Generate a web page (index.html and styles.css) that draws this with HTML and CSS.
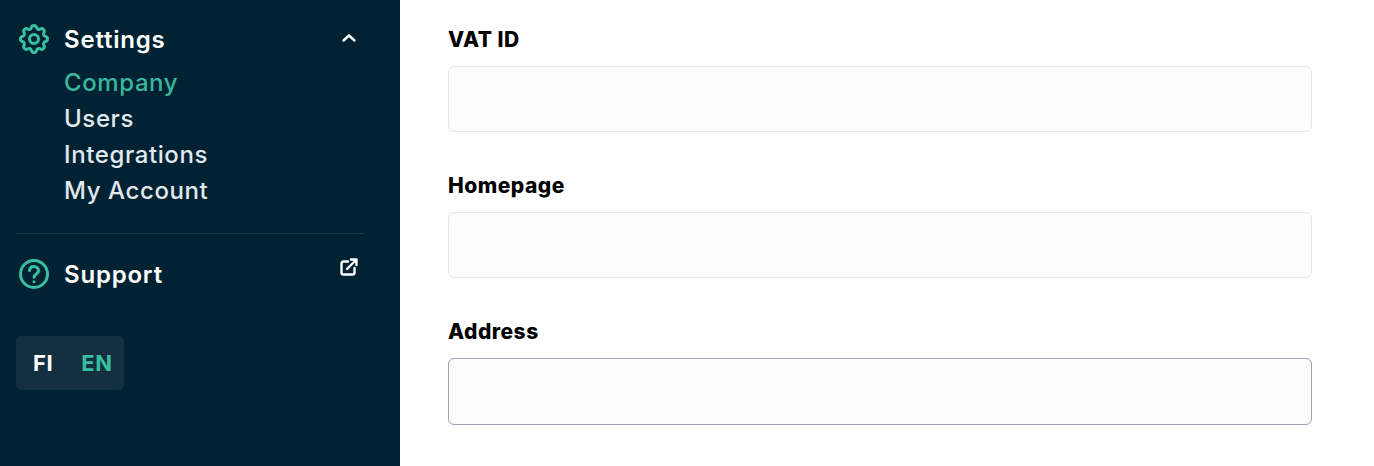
FILE: index.html
```html
<!DOCTYPE html>
<html lang="en">
<head>
  <meta charset="UTF-8">
  <meta name="viewport" content="width=device-width, initial-scale=1.0">
  <title>Company settings</title>
  <link rel="stylesheet" href="styles.css">
</head>
<body>
  <aside class="sidebar">
    <div class="nav-row nav-row-settings">
      <svg class="nav-icon" viewBox="0 0 24 24" fill="none" stroke="currentColor" stroke-width="2" stroke-linecap="round" stroke-linejoin="round">
        <path d="M10.325 4.317c.426-1.756 2.924-1.756 3.35 0a1.724 1.724 0 002.573 1.066c1.543-.94 3.31.826 2.37 2.37a1.724 1.724 0 001.065 2.572c1.756.426 1.756 2.924 0 3.35a1.724 1.724 0 00-1.066 2.573c.94 1.543-.826 3.31-2.37 2.37a1.724 1.724 0 00-2.572 1.065c-.426 1.756-2.924 1.756-3.35 0a1.724 1.724 0 00-2.573-1.066c-1.543.94-3.31-.826-2.37-2.37a1.724 1.724 0 00-1.065-2.572c-1.756-.426-1.756-2.924 0-3.35a1.724 1.724 0 001.066-2.573c-.94-1.543.826-3.31 2.37-2.37.996.608 2.296.07 2.572-1.065z"/>
        <path d="M15 12a3 3 0 11-6 0 3 3 0 016 0z"/>
      </svg>
      <span class="nav-title">Settings</span>
      <svg class="nav-chevron" viewBox="0 0 16 10" fill="none" stroke="currentColor" stroke-width="2.4" stroke-linecap="round" stroke-linejoin="round">
        <path d="M2.5 7.5 8 2.5l5.500 5"/>
      </svg>
    </div>
    <nav class="subnav">
      <a class="subnav-link active" href="#">Company</a>
      <a class="subnav-link" href="#">Users</a>
      <a class="subnav-link" href="#">Integrations</a>
      <a class="subnav-link" href="#">My Account</a>
    </nav>
    <div class="nav-divider"></div>
    <div class="nav-row nav-row-support">
      <svg class="nav-icon" viewBox="0 0 24 24" fill="none" stroke="currentColor" stroke-width="2" stroke-linecap="round" stroke-linejoin="round">
        <path d="M9 9.700c.2-1.600 1.400-2.700 3-2.700 1.700 0 3 1.200 3 2.700 0 1.300-.8 2-1.800 2.600-.8.500-1.200 1-1.200 1.900m0 3h.01M21 12a9 9 0 11-18 0 9 9 0 0118 0z"/>
      </svg>
      <span class="nav-title">Support</span>
      <svg class="nav-external" viewBox="0 0 18 18" fill="none" stroke="currentColor" stroke-width="2.400" stroke-linecap="round" stroke-linejoin="round">
        <path d="M8 3.500H3.500a2 2 0 0 0-2 2v9a2 2 0 0 0 2 2h9a2 2 0 0 0 2-2V10"/>
        <path d="M7 11 15.500 2.500M11 1.500h5.500V7"/>
      </svg>
    </div>
    <div class="lang-switch">
      <span class="lang current">FI</span>
      <span class="lang">EN</span>
    </div>
  </aside>

  <main class="content">
    <div class="field">
      <label class="field-label">VAT ID</label>
      <input class="field-input" type="text">
    </div>
    <div class="field">
      <label class="field-label">Homepage</label>
      <input class="field-input" type="text">
    </div>
    <div class="field">
      <label class="field-label">Address</label>
      <input class="field-input focused" type="text">
    </div>
  </main>
</body>
</html>
```

FILE: styles.css
```css
html, body {
  height: 100%;
}
body {
  margin: 0;
  display: flex;
  overflow: hidden;
  background: #fff;
  font-family: Inter, "Liberation Sans", sans-serif;
}
.sidebar {
  width: 400px;
  flex: none;
  box-sizing: border-box;
  padding: 21px 36px 0 16px;
  background: #012232;
  color: #fff;
}
.nav-row {
  display: flex;
  align-items: center;
  gap: 12px;
  height: 36px;
}
.nav-icon {
  width: 36px;
  height: 36px;
  flex: none;
  color: #38bfa1;
}
.nav-title {
  flex: 1;
  font-size: 24px;
  font-weight: 600;
  letter-spacing: 0.8px;
}
.nav-chevron {
  width: 16px;
  height: 10px;
  margin: 0 7px 2px 0;
}
.subnav {
  display: flex;
  flex-direction: column;
  margin-top: 8px;
  padding-left: 48px;
}
.subnav-link {
  height: 36px;
  line-height: 36px;
  font-size: 24px;
  font-weight: 500;
  letter-spacing: 0.6px;
  color: #e2e8f0;
  text-decoration: none;
}
.subnav-link.active {
  color: #38b89d;
}
.nav-divider {
  height: 1px;
  margin: 24px 0 0;
  background: #1d3d45;
}
.nav-row-support {
  margin-top: 22px;
}
.nav-external {
  width: 18px;
  height: 18px;
  margin: -14px 6px 0 0;
}
.lang-switch {
  display: flex;
  align-items: center;
  gap: 28px;
  width: 108px;
  height: 54px;
  box-sizing: border-box;
  margin-top: 44px;
  padding: 0 10px 0 17px;
  border-radius: 6px;
  background: #142f3f;
  font-size: 22px;
  font-weight: 700;
  letter-spacing: 0.6px;
  color: #38bfa1;
}
.lang.current {
  color: #fff;
}
.content {
  width: 864px;
  padding: 27px 0 0 48px;
}
.field {
  margin-bottom: 41px;
}
.field-label {
  display: block;
  height: 26px;
  line-height: 26px;
  margin-bottom: 13px;
  font-size: 21px;
  font-weight: 800;
  letter-spacing: 0.5px;
  color: #000;
}
.field-input {
  display: block;
  width: 100%;
  height: 66px;
  box-sizing: border-box;
  border: 1px solid #e5e7eb;
  border-radius: 6px;
  background: #fcfcfc;
}
.field-input.focused {
  height: 67px;
  border-color: #9ca3b8;
}
```
